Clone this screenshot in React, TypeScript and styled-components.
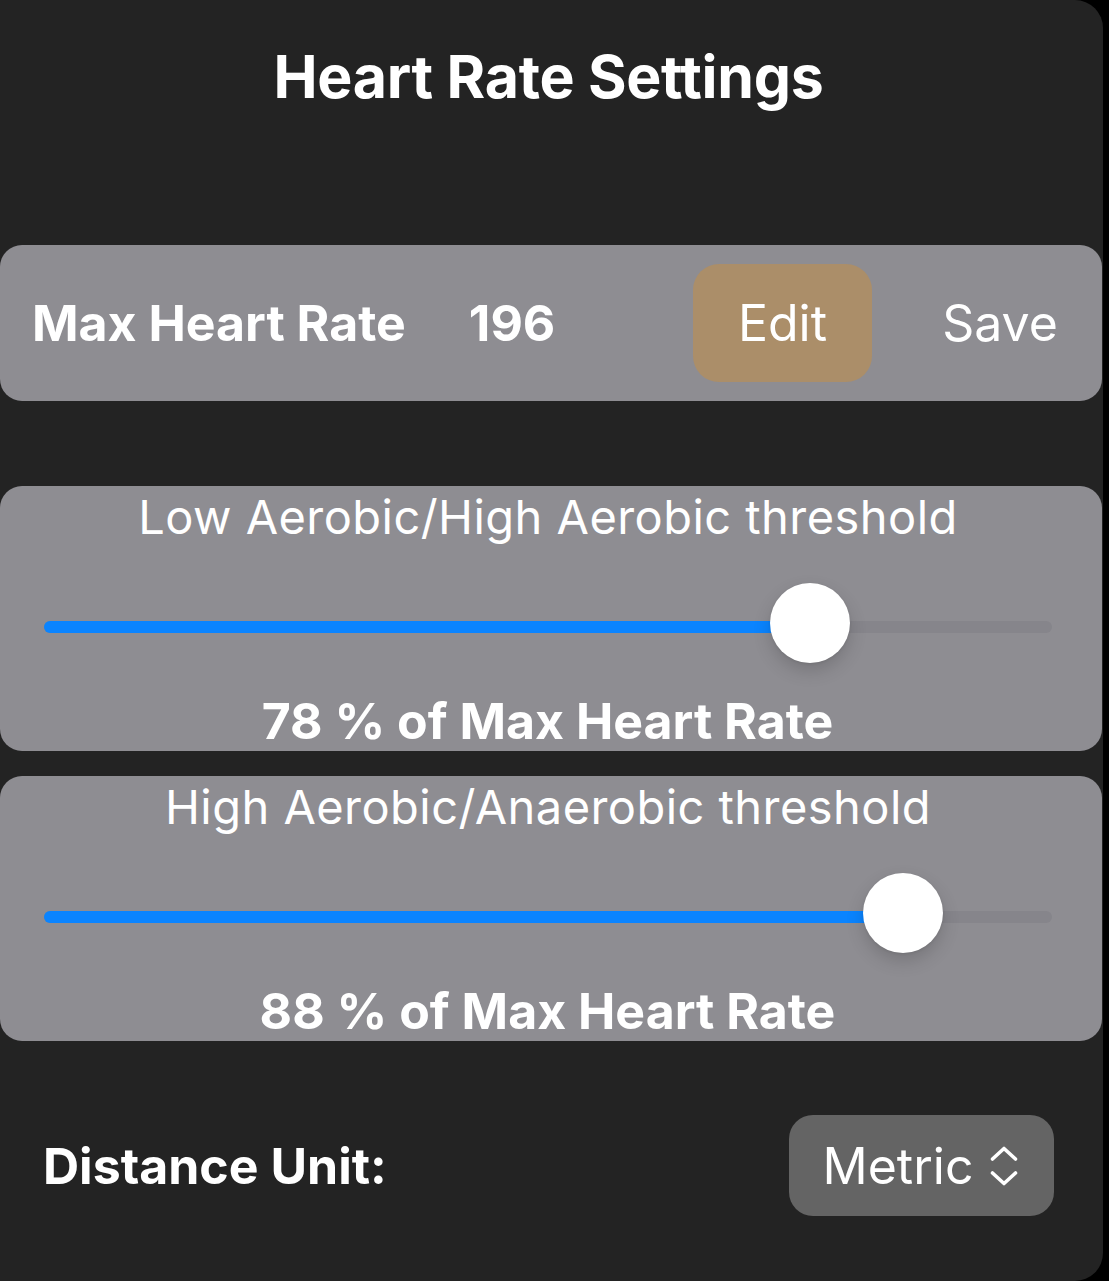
import React from "react";
import styled, { createGlobalStyle } from "styled-components";

const Global = createGlobalStyle`
  html, body { margin: 0; padding: 0; background: #000; }
  body {
    font-family: Inter, "Noto Sans", "Liberation Sans", sans-serif;
    -webkit-font-smoothing: antialiased;
  }
`;

const Panel = styled.main`
  width: 1103px;
  min-height: 1281px;
  box-sizing: border-box;
  background: #232323;
  border-radius: 0 28px 28px 0;
  padding: 47px 1px 0 0;
  display: flex;
  flex-direction: column;
  color: #fff;
`;

const Title = styled.h1`
  margin: 0;
  padding-right: 5px;
  font-size: 59px;
  line-height: 59px;
  font-weight: 700;
  text-align: center;
  letter-spacing: -0.3px;
`;

const Card = styled.section<{ $mt: number }>`
  margin-top: ${(p) => p.$mt}px;
  background: #8e8d92;
  border-radius: 22px;
`;

const MaxRow = styled.div`
  height: 156px;
  display: flex;
  align-items: center;
  padding: 0 32px;
`;

const BoldText = styled.span`
  font-size: 50px;
  line-height: 60px;
  font-weight: 700;
`;

const Value = styled(BoldText)`
  margin-left: 63px;
`;

const Spacer = styled.div`
  flex: 1;
`;

const ActionButton = styled.button<{ $filled?: boolean }>`
  font-family: inherit;
  font-size: 50px;
  font-weight: 400;
  color: #fff;
  border: none;
  padding: 0;
  width: ${(p) => (p.$filled ? "179px" : "140px")};
  height: 118px;
  border-radius: 26px;
  background: ${(p) => (p.$filled ? "#ab8e69" : "transparent")};
  margin-left: ${(p) => (p.$filled ? "0" : "58px")};
`;

const SliderCard = styled.div`
  display: flex;
  flex-direction: column;
  padding-top: 3px;
`;

const SliderTitle = styled.div`
  font-size: 47px;
  line-height: 56px;
  font-weight: 400;
  text-align: center;
  letter-spacing: 0.45px;
  padding-right: 6px;
`;

const SliderArea = styled.div`
  height: 146px;
  box-sizing: border-box;
  padding: 76px 50px 0 44px;
`;

const Track = styled.div`
  position: relative;
  height: 12px;
  border-radius: 6px;
  background: #86858b;
`;

const Fill = styled.div`
  height: 100%;
  border-radius: 6px;
  background: #0a84ff;
`;

const Thumb = styled.div`
  position: absolute;
  top: -38px;
  width: 80px;
  height: 80px;
  border-radius: 50%;
  background: #fff;
  box-shadow: 0 8px 18px rgba(0, 0, 0, 0.16), 0 1px 3px rgba(0, 0, 0, 0.08);
`;

const Percent = styled.div`
  font-size: 50px;
  line-height: 60px;
  font-weight: 700;
  text-align: center;
  padding-right: 7px;
`;

const UnitRow = styled.div`
  margin-top: 74px;
  height: 101px;
  display: flex;
  align-items: center;
  justify-content: space-between;
  padding: 0 48px 0 43px;
`;

const Picker = styled.button`
  font-family: inherit;
  width: 265px;
  height: 101px;
  border: none;
  border-radius: 24px;
  background: #646464;
  color: #fff;
  font-size: 50px;
  font-weight: 400;
  display: flex;
  align-items: center;
  justify-content: center;
  gap: 17px;
  padding: 0 2px 0 0;
`;

const Slider: React.FC<{ title: string; value: number }> = ({ title, value }) => {
  const v = value / 100;
  return (
    <SliderCard>
      <SliderTitle>{title}</SliderTitle>
      <SliderArea>
        <Track>
          <Fill style={{ width: `calc(42px + ${v} * (100% - 80px))` }} />
          <Thumb style={{ left: `calc(2px + ${v} * (100% - 80px))` }} />
        </Track>
      </SliderArea>
      <Percent>{value} % of Max Heart Rate</Percent>
    </SliderCard>
  );
};

const Chevrons = () => (
  <svg width="28" height="40" viewBox="0 0 28 40" fill="none" stroke="#fff" strokeWidth="3.6" strokeLinecap="round" strokeLinejoin="round">
    <path d="M2.5 13 L14 2.5 L25.5 13" />
    <path d="M2.5 27 L14 37.5 L25.5 27" />
  </svg>
);

export default function App() {
  return (
    <>
      <Global />
      <Panel>
        <Title>Heart Rate Settings</Title>
        <Card $mt={139}>
          <MaxRow>
            <BoldText>Max Heart Rate</BoldText>
            <Value>196</Value>
            <Spacer />
            <ActionButton $filled>Edit</ActionButton>
            <ActionButton>Save</ActionButton>
          </MaxRow>
        </Card>
        <Card $mt={85}>
          <Slider title="Low Aerobic/High Aerobic threshold" value={78} />
        </Card>
        <Card $mt={25}>
          <Slider title="High Aerobic/Anaerobic threshold" value={88} />
        </Card>
        <UnitRow>
          <BoldText>Distance Unit:</BoldText>
          <Picker>
            <span>Metric</span>
            <Chevrons />
          </Picker>
        </UnitRow>
      </Panel>
    </>
  );
}
